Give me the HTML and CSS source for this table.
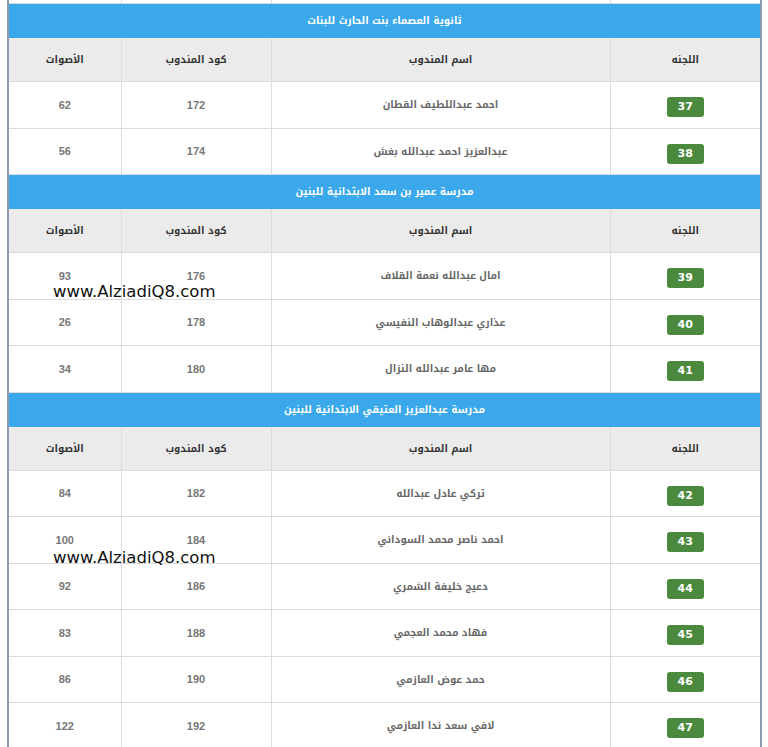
FILE: index.html
```html
<!DOCTYPE html>
<html lang="ar">
<head>
<meta charset="utf-8">
<link rel="stylesheet" href="styles.css">
</head>
<body>
<div class="page">
  <div class="frame">
    <table class="results" dir="rtl">
      <colgroup>
        <col class="c-lj"><col class="c-name"><col class="c-code"><col class="c-votes">
      </colgroup>
      <tbody>
        <tr class="stub"><td></td><td></td><td></td><td></td></tr>
        <tr class="school"><td colspan="4">ثانوية العصماء بنت الحارث للبنات</td></tr>
        <tr class="head"><th>اللجنه</th><th>اسم المندوب</th><th>كود المندوب</th><th>الأصوات</th></tr>
        <tr class="row"><td><span class="badge">37</span></td><td class="name">احمد عبداللطيف القطان</td><td class="num">172</td><td class="num">62</td></tr>
        <tr class="row"><td><span class="badge">38</span></td><td class="name">عبدالعزيز احمد عبدالله بغش</td><td class="num">174</td><td class="num">56</td></tr>
        <tr class="school"><td colspan="4">مدرسة عمير بن سعد الابتدائية للبنين</td></tr>
        <tr class="head"><th>اللجنه</th><th>اسم المندوب</th><th>كود المندوب</th><th>الأصوات</th></tr>
        <tr class="row"><td><span class="badge">39</span></td><td class="name">امال عبدالله نعمة القلاف</td><td class="num">176</td><td class="num">93</td></tr>
        <tr class="row"><td><span class="badge">40</span></td><td class="name">عذاري عبدالوهاب النفيسي</td><td class="num">178</td><td class="num">26</td></tr>
        <tr class="row"><td><span class="badge">41</span></td><td class="name">مها عامر عبدالله النزال</td><td class="num">180</td><td class="num">34</td></tr>
        <tr class="school"><td colspan="4">مدرسة عبدالعزيز العتيقي الابتدائية للبنين</td></tr>
        <tr class="head"><th>اللجنه</th><th>اسم المندوب</th><th>كود المندوب</th><th>الأصوات</th></tr>
        <tr class="row"><td><span class="badge">42</span></td><td class="name">تركي عادل عبدالله</td><td class="num">182</td><td class="num">84</td></tr>
        <tr class="row"><td><span class="badge">43</span></td><td class="name">احمد ناصر محمد السوداني</td><td class="num">184</td><td class="num">100</td></tr>
        <tr class="row"><td><span class="badge">44</span></td><td class="name">دعيج خليفة الشمري</td><td class="num">186</td><td class="num">92</td></tr>
        <tr class="row"><td><span class="badge">45</span></td><td class="name">فهاد محمد العجمي</td><td class="num">188</td><td class="num">83</td></tr>
        <tr class="row"><td><span class="badge">46</span></td><td class="name">حمد عوض العازمي</td><td class="num">190</td><td class="num">86</td></tr>
        <tr class="row"><td><span class="badge">47</span></td><td class="name">لافي سعد ندا العازمي</td><td class="num">192</td><td class="num">122</td></tr>
      </tbody>
    </table>
  </div>
  <div class="watermark wm-1">www.AlziadiQ8.com</div>
  <div class="watermark wm-2">www.AlziadiQ8.com</div>
</div>
</body>
</html>
```
FILE: styles.css
```css
html, body {
  margin: 0;
  padding: 0;
  background: #ffffff;
  height: 747px;
  overflow: hidden;
}
.page {
  position: relative;
  width: 768px;
  height: 747px;
  overflow: hidden;
}
.frame {
  margin-left: 7px;
  width: 751px;
  border-left: 2px solid #8d9bb3;
  border-right: 2px solid #8d9bb3;
}
.results {
  width: 751px;
  border-collapse: collapse;
  table-layout: fixed;
  font-family: "Noto Kufi Arabic", "Noto Sans Arabic", "DejaVu Sans", sans-serif;
}
.c-lj { width: 150px; }
.c-name { width: 339px; }
.c-code { width: 150px; }
.c-votes { width: 112px; }
.results td, .results th {
  border: 1px solid #dcdcdc;
  text-align: center;
  vertical-align: middle;
  padding: 0;
}
.results tr > :first-child { border-right: 0; }
.results tr > :last-child { border-left: 0; }
.stub td {
  height: 3px;
  border-top: 0;
}
.school td {
  height: 33px;
  background: #3aa8ea;
  border-color: #3aa8ea;
  color: #ffffff;
  font-size: 10px;
  font-weight: bold;
}
.head th {
  height: 43px;
  background: #ebebeb;
  color: #333333;
  font-size: 10px;
  font-weight: bold;
}
.row td {
  height: 45.5px;
  color: #555555;
}
.row .name {
  font-size: 10px;
  font-weight: bold;
  color: #666666;
}
.row .num {
  font-family: "Liberation Sans", Arial, sans-serif;
  font-size: 11px;
  font-weight: bold;
  color: #777777;
}
.badge {
  display: inline-block;
  width: 37px;
  height: 20px;
  line-height: 20px;
  border-radius: 3px;
  background: #4b8a3e;
  color: #ffffff;
  font-family: "DejaVu Sans", sans-serif;
  font-size: 11px;
  font-weight: bold;
}
.watermark {
  position: absolute;
  left: 53px;
  font-family: "DejaVu Sans", "Liberation Sans", sans-serif;
  font-size: 16.5px;
  color: #111111;
  line-height: 20px;
}
.wm-1 { top: 282px; }
.wm-2 { top: 548px; }
```
